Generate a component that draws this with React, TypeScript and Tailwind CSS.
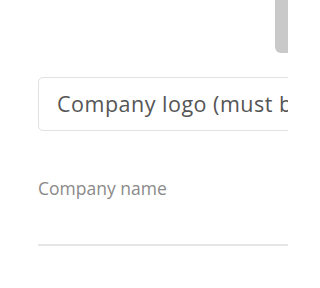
export default function App() {
  return (
    <div className="w-[288px] h-[288px] overflow-hidden bg-white" style={{ fontFamily: "'Open Sans', Lato, sans-serif" }}>
      <div className="w-[560px] pl-[38px]">
        {/* top action button, cut off at the edge */}
        <div className="flex h-[53px]">
          <div className="ml-[237px] w-[120px] h-[53px] rounded-b-[6px] bg-[#c9c9c9]" />
        </div>

        {/* logo upload field */}
        <div className="mt-[24px] h-[54px] flex items-center pl-[18px] rounded-[5px] border border-[#e2e2e2] text-[21.5px] tracking-[0.5px] text-[#555] whitespace-nowrap">
          Company logo (must be a square image)
        </div>

        {/* company name */}
        <label className="block mt-[45px] text-[17.5px] leading-[24px] text-[#8a8a8a]">Company name</label>
        <input className="block w-full h-[46px] border-b-2 border-[#e6e6e6] outline-none" />
      </div>
    </div>
  );
}
